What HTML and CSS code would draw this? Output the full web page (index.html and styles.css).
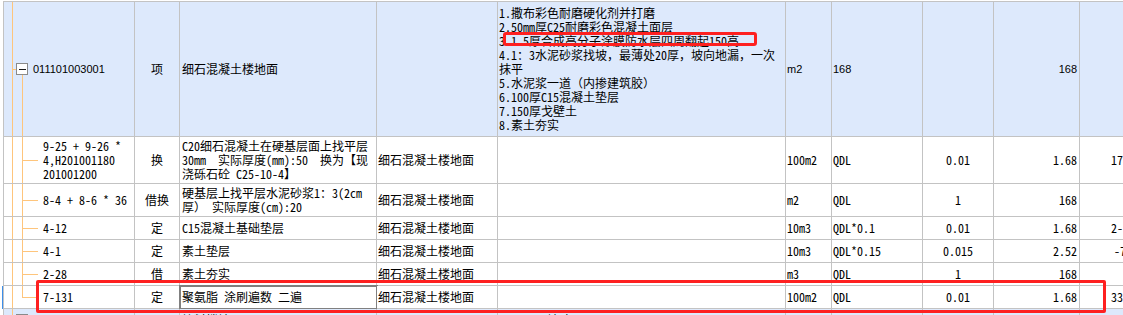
FILE: index.html
```html
<!DOCTYPE html>
<html lang="zh-CN">
<head>
<meta charset="utf-8">
<title>清单定额</title>
<link rel="stylesheet" href="styles.css">
</head>
<body>
<div class="sheet">
  <div class="grid">
    <div class="row parent">
      <div class="c code tree-parent"><span class="toggle"></span><span class="pcode">011101003001</span></div>
      <div class="c type"><span>项</span></div>
      <div class="c name"><span>细石混凝土楼地面</span></div>
      <div class="c feat"></div>
      <div class="c desc"><div>1.撒布彩色耐磨硬化剂并打磨<br>2.50mm厚C25耐磨彩色混凝土面层<br>3.1.5厚合成高分子涂膜防水层四周翻起150高<br>4.1：3水泥砂浆找坡，最薄处20厚，坡向地漏，一次<br>抹平<br>5.水泥浆一道（内掺建筑胶）<br>6.100厚C15混凝土垫层<br>7.150厚戈壁土<br>8.素土夯实</div></div>
      <div class="c unit lat"><span>m2</span></div>
      <div class="c expr lat"><span>168</span></div>
      <div class="c ctr"></div>
      <div class="c num lat"><span>168</span></div>
      <div class="c last"></div>
    </div>

    <div class="row child">
      <div class="c code tree-child"><div>9-25 + 9-26 *<br>4,H201001180<br>201001200</div></div>
      <div class="c type"><span>换</span></div>
      <div class="c name"><div>C20细石混凝土在硬基层面上找平层<br>30mm  实际厚度(mm):50  换为【现<br>浇砾石砼 C25-10-4】</div></div>
      <div class="c feat"><span>细石混凝土楼地面</span></div>
      <div class="c desc"></div>
      <div class="c unit"><span>100m2</span></div>
      <div class="c expr"><span>QDL</span></div>
      <div class="c ctr"><span>0.01</span></div>
      <div class="c num"><span>1.68</span></div>
      <div class="c last"><span>1788.31</span></div>
    </div>

    <div class="row child">
      <div class="c code tree-child"><span>8-4 + 8-6 * 36</span></div>
      <div class="c type"><span>借换</span></div>
      <div class="c name"><div>硬基层上找平层水泥砂浆1：3(2cm<br>厚） 实际厚度(cm):20</div></div>
      <div class="c feat"><span>细石混凝土楼地面</span></div>
      <div class="c desc"></div>
      <div class="c unit"><span>m2</span></div>
      <div class="c expr"><span>QDL</span></div>
      <div class="c ctr"><span>1</span></div>
      <div class="c num"><span>168</span></div>
      <div class="c last"></div>
    </div>

    <div class="row child">
      <div class="c code tree-child"><span>4-12</span></div>
      <div class="c type"><span>定</span></div>
      <div class="c name"><span>C15混凝土基础垫层</span></div>
      <div class="c feat"><span>细石混凝土楼地面</span></div>
      <div class="c desc"></div>
      <div class="c unit"><span>10m3</span></div>
      <div class="c expr"><span>QDL*0.1</span></div>
      <div class="c ctr"><span>0.01</span></div>
      <div class="c num"><span>1.68</span></div>
      <div class="c last"><span>2-56.32</span></div>
    </div>

    <div class="row child">
      <div class="c code tree-child"><span>4-1</span></div>
      <div class="c type"><span>定</span></div>
      <div class="c name"><span>素土垫层</span></div>
      <div class="c feat"><span>细石混凝土楼地面</span></div>
      <div class="c desc"></div>
      <div class="c unit"><span>10m3</span></div>
      <div class="c expr"><span>QDL*0.15</span></div>
      <div class="c ctr"><span>0.015</span></div>
      <div class="c num"><span>2.52</span></div>
      <div class="c last short"><span>-71.4</span></div>
    </div>

    <div class="row child">
      <div class="c code tree-child"><span>2-28</span></div>
      <div class="c type"><span>借</span></div>
      <div class="c name"><span>素土夯实</span></div>
      <div class="c feat"><span>细石混凝土楼地面</span></div>
      <div class="c desc"></div>
      <div class="c unit"><span>m3</span></div>
      <div class="c expr"><span>QDL</span></div>
      <div class="c ctr"><span>1</span></div>
      <div class="c num"><span>168</span></div>
      <div class="c last"></div>
    </div>

    <div class="row child">
      <div class="c code tree-child tree-last selrow"><span>7-131</span></div>
      <div class="c type"><span>定</span></div>
      <div class="c name sel"><span>聚氨脂 涂刷遍数 二遍</span></div>
      <div class="c feat"><span>细石混凝土楼地面</span></div>
      <div class="c desc"></div>
      <div class="c unit"><span>100m2</span></div>
      <div class="c expr"><span>QDL</span></div>
      <div class="c ctr"><span>0.01</span></div>
      <div class="c num"><span>1.68</span></div>
      <div class="c last"><span>3326.40</span></div>
    </div>

    <div class="row parent">
      <div class="c code tree-parent tree-next"><span class="toggle"></span><span class="pcode">011102003001</span></div>
      <div class="c type"><span>项</span></div>
      <div class="c name"><span>块料楼地面</span></div>
      <div class="c feat"></div>
      <div class="c desc"><span>1.8-10厚地砖</span></div>
      <div class="c unit lat"><span>m2</span></div>
      <div class="c expr lat"><span>56</span></div>
      <div class="c ctr"></div>
      <div class="c num lat"><span>56</span></div>
      <div class="c last"></div>
    </div>
  </div>

  <div class="mark mark-desc"></div>
  <div class="mark mark-row"></div>
  <div class="selbar"></div>
</div>
</body>
</html>
```

FILE: styles.css
```css
html, body {
  margin: 0;
  padding: 0;
  overflow: hidden;
  background: #ffffff;
}

body {
  font-family: "Noto Sans Mono CJK SC", "Noto Sans CJK SC", "Liberation Mono", monospace;
  font-size: 12px;
  color: #000000;
}

.sheet {
  position: relative;
  width: 1123px;
  height: 315px;
  padding: 1px 0 0 3px;
  box-sizing: border-box;
  overflow: hidden;
}

.grid {
  display: grid;
  grid-template-columns: 131px 45px 197px 121px 288px 46px 91px 71px 86px 120px;
  grid-template-rows: 135px 47px 33px 23px 23px 23px 23px 23px;
  width: max-content;
  border-top: 1px solid #c3c3c3;
  border-left: 1px solid #c3c3c3;
}

.row {
  display: contents;
}

.c {
  box-sizing: border-box;
  display: flex;
  align-items: center;
  padding: 0 1px;
  border-right: 1px solid #c3c3c3;
  border-bottom: 1px solid #c3c3c3;
  white-space: pre;
  overflow: hidden;
  line-height: 14px;
  background-color: #ffffff;
}

.parent > .c {
  background-color: #dde9fc;
}

.type,
.ctr {
  justify-content: center;
}

.name {
  padding-left: 2px;
}

.num {
  justify-content: flex-end;
  padding-right: 2px;
}

.last {
  padding-left: 31px;
}

.last.short {
  padding-left: 34px;
}

.lat {
  font-family: "Liberation Sans", Arial, sans-serif;
  font-size: 11px;
}

/* tree connectors */
.code {
  --tree: #fec57c;
  background-repeat: no-repeat;
}

.tree-parent {
  padding-left: 12px;
  background-image:
    linear-gradient(var(--tree), var(--tree)),
    linear-gradient(var(--tree), var(--tree)),
    linear-gradient(var(--tree), var(--tree));
  background-position: 8px 0, 8px 50%, 18px 72px;
  background-size: 1px 100%, 4px 1px, 1px 100%;
}

.tree-next {
  background-position: 8px 0, 8px 50%, 18px 100%;
  background-size: 1px 100%, 4px 1px, 0 0;
}

.tree-child {
  padding-left: 39px;
  background-image:
    linear-gradient(var(--tree), var(--tree)),
    linear-gradient(var(--tree), var(--tree)),
    linear-gradient(var(--tree), var(--tree));
  background-position: 8px 0, 18px 0, 18px 50%;
  background-size: 1px 100%, 1px 100%, 16px 1px;
}

.tree-last {
  background-size: 1px 100%, 1px 50%, 16px 1px;
}

.toggle {
  box-sizing: border-box;
  width: 12px;
  height: 12px;
  border: 1px solid #8a8a8a;
  background: #ffffff;
  display: flex;
  align-items: center;
  justify-content: center;
  flex: none;
}

.toggle::before {
  content: "";
  width: 7px;
  height: 1px;
  background: #1a1a1a;
}

.pcode {
  margin-left: 5px;
  font-family: "Liberation Sans", Arial, sans-serif;
  font-size: 11px;
}

.sel {
  outline: 2px solid #808080;
  outline-offset: -1px;
}

/* annotations */
.mark {
  position: absolute;
  box-sizing: border-box;
  border: 3px solid #fe2020;
}

.mark-desc {
  left: 503px;
  top: 32px;
  width: 254px;
  height: 14px;
  border-radius: 3px;
}

.mark-row {
  left: 36px;
  top: 280px;
  width: 1070px;
  height: 33px;
  border-radius: 2px;
}

.selbar {
  position: absolute;
  left: 2px;
  top: 286px;
  width: 1px;
  height: 23px;
  background: #3d8ee8;
}
```
